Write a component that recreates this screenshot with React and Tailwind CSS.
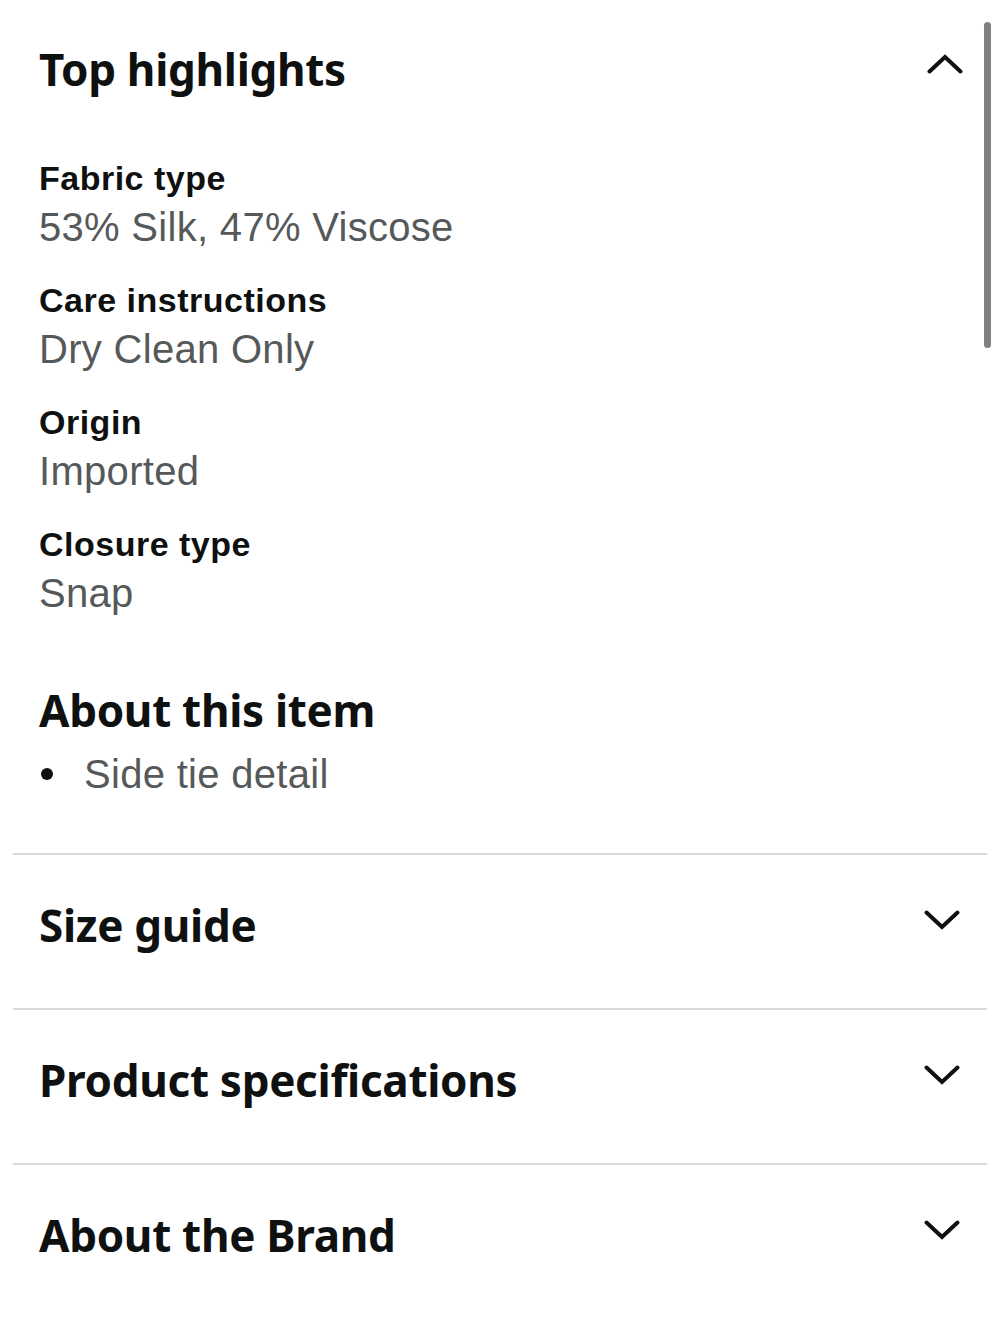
import React from 'react';

const FIELDS = [
  { label: 'Fabric type', value: '53% Silk, 47% Viscose' },
  { label: 'Care instructions', value: 'Dry Clean Only' },
  { label: 'Origin', value: 'Imported' },
  { label: 'Closure type', value: 'Snap' },
];

const SECTIONS = ['Size guide', 'Product specifications', 'About the Brand'];

const Chevron = ({ up = false }) => (
  <svg width="36" height="20" viewBox="0 0 36 20" className="shrink-0">
    <path
      d={up ? 'M2.5 17.5 L18 3 L33.5 17.5' : 'M2.5 2.5 L18 17 L33.5 2.5'}
      fill="none"
      stroke="#0f1111"
      strokeWidth="4"
      strokeLinecap="round"
      strokeLinejoin="miter"
    />
  </svg>
);

const Heading = ({ children }) => (
  <h2 className="font-['Noto_Sans',sans-serif] text-[44px] font-bold leading-[54px] tracking-[-0.3px] text-[#0f1111]">
    {children}
  </h2>
);

const App = () => {
  return (
    <div className="relative min-h-[1333px] bg-white px-[13px] font-['Liberation_Sans',Arial,sans-serif]">
      {/* scroll indicator */}
      <div className="absolute left-[984px] top-[22px] h-[326px] w-[7px] rounded-full bg-[#7f7f7f]" />

      <section className="px-[26px] pt-[42px]">
        <div className="flex items-center justify-between">
          <Heading>Top highlights</Heading>
          <div className="-mt-[10px] -mr-[2px]">
            <Chevron up />
          </div>
        </div>

        <dl className="mt-[63px] flex flex-col gap-[31px]">
          {FIELDS.map((f) => (
            <div key={f.label} className="flex flex-col">
              <dt className="text-[34px] font-bold leading-[38px] tracking-[0.5px] text-[#0f1111]">
                {f.label}
              </dt>
              <dd className="mt-[7px] text-[40px] leading-[46px] tracking-[0.3px] text-[#565959]">
                {f.value}
              </dd>
            </div>
          ))}
        </dl>
      </section>

      <section className="px-[26px] pt-[67px] pb-[56px]">
        <Heading>About this item</Heading>
        <ul className="mt-[14px]">
          <li className="flex items-center">
            <span className="ml-[2px] mr-[31px] h-[12px] w-[12px] rounded-full bg-[#0f1111]" />
            <span className="text-[40px] leading-[46px] tracking-[0.3px] text-[#565959]">Side tie detail</span>
          </li>
        </ul>
      </section>

      {SECTIONS.map((s) => (
        <div key={s} className="border-t-2 border-[#d5d9d9]">
          <button
            type="button"
            className="flex w-full items-center justify-between px-[26px] pt-[43px] pb-[56px] text-left"
          >
            <Heading>{s}</Heading>
            <div className="-mt-[10px] mr-[1px]">
              <Chevron />
            </div>
          </button>
        </div>
      ))}
    </div>
  );
};

export default App;
